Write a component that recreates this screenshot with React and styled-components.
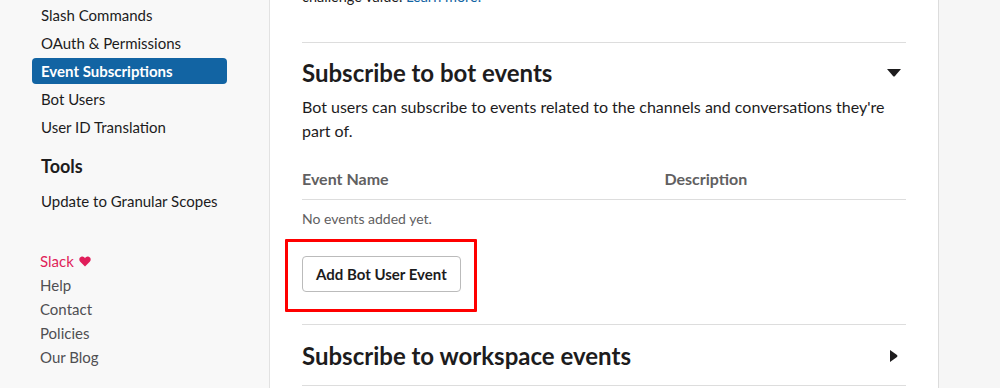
import React from "react";
import styled, { createGlobalStyle } from "styled-components";

const GlobalStyle = createGlobalStyle`
  html, body {
    margin: 0;
    padding: 0;
    height: 388px;
    overflow: hidden;
    font-family: Lato, "Open Sans", sans-serif;
    color: #1d1c1d;
    -webkit-font-smoothing: antialiased;
  }
`;

const Page = styled.div`
  display: flex;
  width: 1000px;
  height: 388px;
  overflow: hidden;
  background: #fff;
`;

const Sidebar = styled.aside`
  width: 270px;
  flex-shrink: 0;
  background: #f8f8f8;
  border-right: 1px solid #e2e2e2;
  padding: 2px 42px 0 32px;
  box-sizing: border-box;
`;

const NavList = styled.ul`
  list-style: none;
  margin: 0;
  padding: 0;
  width: 195px;
`;

const NavItem = styled.li`
  height: 26px;
  line-height: 26px;
  margin-bottom: 2px;
  padding: 0 9px;
  border-radius: 4px;
  font-size: 15px;
  white-space: nowrap;
  color: ${(p) => (p.active ? "#fff" : "#1d1c1d")};
  background: ${(p) => (p.active ? "#1264a3" : "transparent")};
  font-weight: ${(p) => (p.active ? 700 : 400)};
`;

const NavHeading = styled.h3`
  margin: 13px 0 9px 9px;
  font-size: 18px;
  line-height: 26px;
  font-weight: 700;
`;

const Footer = styled.ul`
  list-style: none;
  margin: 35px 0 0 8px;
  padding: 0;
`;

const FooterLink = styled.li`
  font-size: 15px;
  line-height: 24px;
  color: ${(p) => (p.brand ? "#e01e5a" : "#4f4f52")};
  display: flex;
  align-items: center;
  gap: 5px;
`;

const Main = styled.main`
  flex: 1;
  padding: 0 32px;
  min-width: 0;
`;

const Lead = styled.p`
  margin: -13px 0 0;
  font-size: 14.5px;
  line-height: 20px;
  color: #1d1c1d;

  a {
    color: #1264a3;
    text-decoration: none;
  }
`;

const Section = styled.section`
  border-top: 1px solid #dddddd;
  margin-top: ${(p) => p.gap || 0}px;
  padding-top: ${(p) => p.pad || 15}px;
  padding-bottom: ${(p) => p.padBottom || 0}px;
`;

const SectionHead = styled.div`
  display: flex;
  align-items: center;
  justify-content: space-between;
`;

const Title = styled.h2`
  margin: 0;
  font-size: 24px;
  line-height: 30px;
  font-weight: 700;
  color: #1d1c1d;
`;

const Caret = styled.svg`
  width: 14px;
  height: 14px;
  margin-right: ${(p) => p.$offset || 5}px;
  fill: #1d1c1d;
`;

const Description = styled.p`
  margin: 7px 0 0;
  font-size: 16px;
  line-height: 24px;
`;

const Table = styled.div`
  margin-top: 24px;
`;

const HeaderRow = styled.div`
  display: grid;
  grid-template-columns: 60% 40%;
  border-bottom: 1px solid #dddddd;
  padding-bottom: 8px;
`;

const HeaderCell = styled.div`
  font-size: 16px;
  line-height: 24px;
  font-weight: 700;
  color: #616061;
`;

const Empty = styled.div`
  font-size: 14px;
  line-height: 20px;
  color: #616061;
  padding-top: 9px;
`;

const ButtonWrap = styled.div`
  position: relative;
  display: inline-block;
  margin: 27px 0 32px;
  vertical-align: top;

  &::after {
    content: "";
    position: absolute;
    left: -17px;
    top: -17px;
    right: -16px;
    bottom: -20px;
    border: 3px solid #ff0000;
    border-radius: 1px;
    pointer-events: none;
  }
`;

const Button = styled.button`
  display: block;
  height: 36px;
  padding: 0 13px;
  background: #fff;
  border: 1px solid #bbbbbb;
  border-radius: 4px;
  font-family: inherit;
  font-size: 15px;
  font-weight: 700;
  color: #1d1c1d;
`;

const Aside = styled.div`
  width: 61px;
  flex-shrink: 0;
  background: #f6f6f6;
  border-left: 1px solid #dcdcdc;
`;

const CaretDown = () => (
  <Caret viewBox="0 0 14 14">
    <path d="M0 3 H14 L8 10 Q7 11 6 10 Z" />
  </Caret>
);

const CaretRight = () => (
  <Caret viewBox="0 0 14 14" $offset={5}>
    <path d="M3 1 L10 6 Q11 7 10 8 L3 13 Z" />
  </Caret>
);

const Heart = () => (
  <svg width="12" height="11" viewBox="0 0 24 22" fill="#e01e5a">
    <path d="M12 21 L2.5 11.5 C-0.5 8.5 0 3 4.5 1.5 C8 0.3 10.5 2 12 4.5 C13.5 2 16 0.3 19.5 1.5 C24 3 24.5 8.5 21.5 11.5 Z" />
  </svg>
);

export default function App() {
  const features = [
    "Slash Commands",
    "OAuth & Permissions",
    "Event Subscriptions",
    "Bot Users",
    "User ID Translation",
  ];

  return (
    <>
      <GlobalStyle />
      <Page>
        <Sidebar>
          <NavList>
            {features.map((f) => (
              <NavItem key={f} active={f === "Event Subscriptions"}>
                {f}
              </NavItem>
            ))}
          </NavList>
          <NavHeading>Tools</NavHeading>
          <NavList>
            <NavItem>Update to Granular Scopes</NavItem>
          </NavList>
          <Footer>
            <FooterLink brand>
              Slack <Heart />
            </FooterLink>
            <FooterLink>Help</FooterLink>
            <FooterLink>Contact</FooterLink>
            <FooterLink>Policies</FooterLink>
            <FooterLink>Our Blog</FooterLink>
          </Footer>
        </Sidebar>

        <Main>
          <Lead>
            challenge value. <a href="#">Learn more.</a>
          </Lead>

          <Section gap={35}>
            <SectionHead>
              <Title>Subscribe to bot events</Title>
              <CaretDown />
            </SectionHead>
            <Description>
              Bot users can subscribe to events related to the channels and
              conversations they're part of.
            </Description>
            <Table>
              <HeaderRow>
                <HeaderCell>Event Name</HeaderCell>
                <HeaderCell>Description</HeaderCell>
              </HeaderRow>
              <Empty>No events added yet.</Empty>
            </Table>
            <ButtonWrap>
              <Button>Add Bot User Event</Button>
            </ButtonWrap>
          </Section>

          <Section pad={16} padBottom={14}>
            <SectionHead>
              <Title>Subscribe to workspace events</Title>
              <CaretRight />
            </SectionHead>
          </Section>
          <Section />
        </Main>

        <Aside />
      </Page>
    </>
  );
}
